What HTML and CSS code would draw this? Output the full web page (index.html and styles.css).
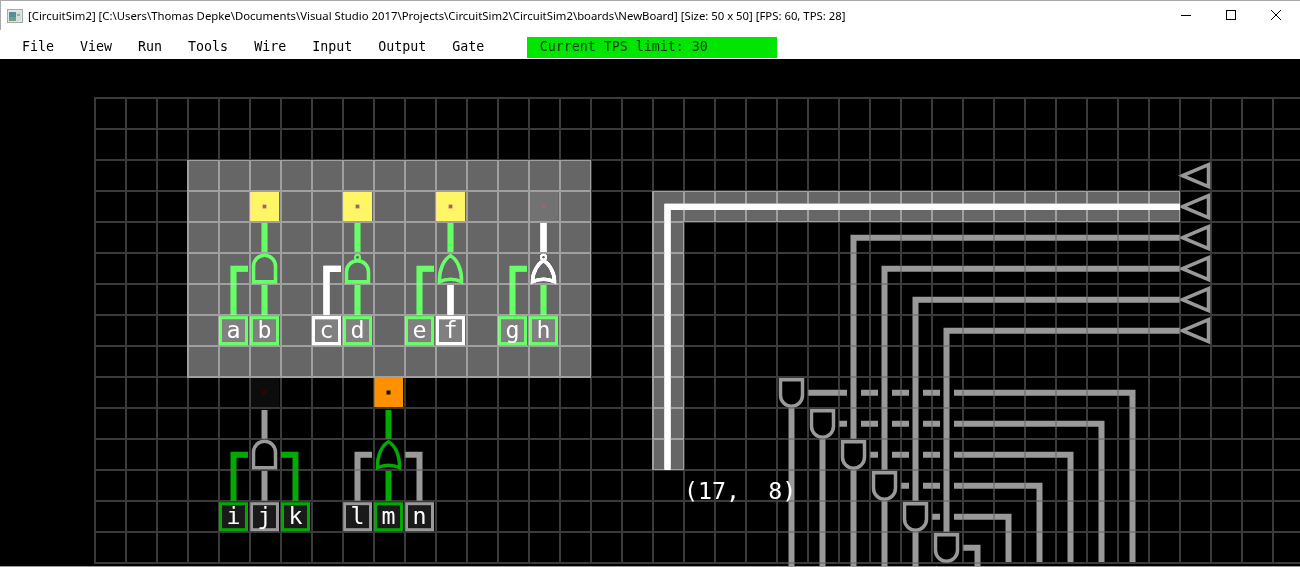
FILE: index.html
```html
<!DOCTYPE html>
<html lang="en">

<head>
  <meta charset="UTF-8">
  <title>CircuitSim2</title>
  <link rel="stylesheet" href="styles.css">
</head>

<body>
  <div class="titlebar">
    <svg class="app-icon" width="16" height="14" viewBox="0 0 16 14">
      <rect x="0.5" y="0.5" width="15" height="13" fill="#e4e4e4" stroke="#a8a8a8" />
      <rect x="2" y="3" width="7" height="9" fill="#4f8f9f" />
      <rect x="2" y="8" width="7" height="4" fill="#6f9f85" />
      <rect x="9" y="3" width="5" height="9" fill="#d4dedb" />
      <rect x="10" y="5" width="3" height="2" fill="#8fb59f" />
    </svg>
    <span class="title">[CircuitSim2] [C:\Users\Thomas Depke\Documents\Visual Studio 2017\Projects\CircuitSim2\CircuitSim2\boards\NewBoard] [Size: 50 x 50] [FPS: 60, TPS: 28]</span>
    <div class="controls">
      <svg width="12" height="12" viewBox="0 0 12 12"><path d="M1 6.5H11" /></svg>
      <svg width="12" height="12" viewBox="0 0 12 12"><rect x="1.5" y="1.5" width="9" height="9" /></svg>
      <svg width="12" height="12" viewBox="0 0 12 12"><path d="M1 1L11 11M11 1L1 11" /></svg>
    </div>
  </div>

  <div class="menubar">
    <span>File</span>
    <span>View</span>
    <span>Run</span>
    <span>Tools</span>
    <span>Wire</span>
    <span>Input</span>
    <span>Output</span>
    <span>Gate</span>
    <div class="tps">Current TPS limit: 30</div>
  </div>

  <svg class="board" width="1300" height="508" viewBox="0 59 1300 508">
    <defs>
      <path id="and" d="M-11 13V-2.5A11 11 0 0 1 11 -2.5V13Z" />
      <path id="and-down" d="M-11 -13V2.5A11 11 0 0 0 11 2.5V-13Z" />
      <path id="or" d="M-11 13Q0 8 11 13C11.5 0 6 -10 0 -13C-6 -10 -11.5 0 -11 13Z" />
      <g id="nand">
        <path d="M-11 13V3A11 11 0 0 1 11 3V13Z" />
        <circle cy="-11.5" r="2.5" stroke-width="2" />
      </g>
      <g id="nor">
        <path d="M-11 13Q0 8 11 13C11 4 6 -5 0 -8C-6 -5 -11 4 -11 13Z" />
        <circle cy="-11.5" r="2.5" stroke-width="2" />
      </g>
      <path id="out" d="M-13 0L13 -11V11Z" />
      <rect id="box" x="-13" y="-13" width="26" height="26" />
    </defs>

    <!-- wires -->
    <g class="wires on">
      <path d="M264.5 223V252M264.5 285V315M233.5 315V268.7H248" />
      <path d="M357.5 223V252M357.5 285V315" />
      <path d="M450.5 223V252M419.5 315V268.7H434" />
      <path d="M543.5 285V315M512.5 315V268.7H527" />
      <path d="M233.5 501V454.7H248M295.5 501V454.7H281M388.5 410V439M388.5 471V501" />
    </g>
    <g class="wires high">
      <path d="M326.5 315V268.7H341M450.5 285V315M543.5 223V252" />
      <path d="M1180 206.7H667.5V470" />
    </g>
    <g class="wires off">
      <path d="M264.5 410V439M264.5 471V501M357.5 501V454.7H372M419.5 501V454.7H405" />
      <path d="M1180 237.7H853.5V439M1180 268.7H884.5V470M1180 299.7H915.5V501M1180 330.7H946.5V532" />
      <path d="M791.5 408V566M822.5 439V566M853.5 470V566M884.5 501V566M915.5 532V566" />
      <path d="M808 392.7H847M861 392.7H878M892 392.7H909M923 392.7H940M954 392.7H1132.5V562" />
      <path d="M839 423.7H847M861 423.7H878M892 423.7H909M923 423.7H940M954 423.7H1101.5V562" />
      <path d="M870 454.7H878M892 454.7H909M923 454.7H940M954 454.7H1070.5V562" />
      <path d="M901 485.7H909M923 485.7H940M954 485.7H1039.5V562" />
      <path d="M932 516.7H940M954 516.7H1008.5V562" />
      <path d="M963 547.7H977.5V566" />
    </g>

    <!-- gates -->
    <g class="gates">
      <use href="#and" class="on" x="264.5" y="268.7" />
      <use href="#nand" class="on" x="357.5" y="268.7" />
      <use href="#or" class="on" x="450.5" y="268.7" />
      <use href="#nor" class="high" x="543.5" y="268.7" />
      <use href="#and" class="off" x="264.5" y="454.7" />
      <use href="#or" class="on" x="388.5" y="454.7" />
      <use href="#and-down" class="off" x="791.5" y="392.7" />
      <use href="#and-down" class="off" x="822.5" y="423.7" />
      <use href="#and-down" class="off" x="853.5" y="454.7" />
      <use href="#and-down" class="off" x="884.5" y="485.7" />
      <use href="#and-down" class="off" x="915.5" y="516.7" />
      <use href="#and-down" class="off" x="946.5" y="547.7" />
      <use href="#out" class="off" x="1195.5" y="175.7" />
      <use href="#out" class="off" x="1195.5" y="206.7" />
      <use href="#out" class="off" x="1195.5" y="237.7" />
      <use href="#out" class="off" x="1195.5" y="268.7" />
      <use href="#out" class="off" x="1195.5" y="299.7" />
      <use href="#out" class="off" x="1195.5" y="330.7" />
    </g>

    <!-- lamps -->
    <rect class="lamp lit" x="250" y="192" width="29" height="29" />
    <rect class="lamp lit" x="343" y="192" width="29" height="29" />
    <rect class="lamp lit" x="436" y="192" width="29" height="29" />
    <rect class="lamp dark" x="529" y="192" width="29" height="29" />
    <rect class="lamp dark" x="250" y="378" width="29" height="29" />
    <rect class="lamp lit" x="374" y="378" width="29" height="29" />
    <rect class="lamp-dot" x="262.5" y="204.5" width="4" height="4" />
    <rect class="lamp-dot" x="355.5" y="204.5" width="4" height="4" />
    <rect class="lamp-dot" x="448.5" y="204.5" width="4" height="4" />
    <rect class="lamp-dot red" x="541.5" y="204.5" width="4" height="4" />
    <rect class="lamp-dot red" x="262.5" y="390.5" width="4" height="4" />
    <rect class="lamp-dot" x="386.5" y="390.5" width="4" height="4" />

    <!-- input nodes -->
    <g class="nodes">
      <use href="#box" class="on" x="233.5" y="330.7" />
      <use href="#box" class="on" x="264.5" y="330.7" />
      <use href="#box" class="high" x="326.5" y="330.7" />
      <use href="#box" class="on" x="357.5" y="330.7" />
      <use href="#box" class="on" x="419.5" y="330.7" />
      <use href="#box" class="high" x="450.5" y="330.7" />
      <use href="#box" class="on" x="512.5" y="330.7" />
      <use href="#box" class="on" x="543.5" y="330.7" />
      <use href="#box" class="on" x="233.5" y="516.7" />
      <use href="#box" class="off" x="264.5" y="516.7" />
      <use href="#box" class="on" x="295.5" y="516.7" />
      <use href="#box" class="off" x="357.5" y="516.7" />
      <use href="#box" class="on" x="388.5" y="516.7" />
      <use href="#box" class="off" x="419.5" y="516.7" />
    </g>

    <!-- one path so the crossings don't add up -->
    <path class="grid" d="M94 98H1300m0 31H94m0 31H1300m0 31H94m0 31H1300m0 31H94m0 31H1300m0 31H94m0 31H1300m0 31H94m0 31H1300m0 31H94m0 31H1300m0 31H94m0 31H1300m0 31H94
      M95 97V564m31 0V97m31 0V564m31 0V97m31 0V564m31 0V97m31 0V564m31 0V97m31 0V564m31 0V97m31 0V564m31 0V97m31 0V564m31 0V97m31 0V564m31 0V97m31 0V564m31 0V97m31 0V564m31 0V97m31 0V564m31 0V97m31 0V564m31 0V97m31 0V564m31 0V97m31 0V564m31 0V97m31 0V564m31 0V97m31 0V564m31 0V97
      m31 0V564m31 0V97m31 0V564m31 0V97m31 0V564m31 0V97m31 0V564" />

    <!-- selection adds light on top of everything under it -->
    <path class="selection" d="M187 160H591V378H187ZM652 191H1180V222H684V470H652Z" />

    <g class="labels">
      <text x="233.5" y="338">a</text>
      <text x="264.5" y="338">b</text>
      <text x="326.5" y="338">c</text>
      <text x="357.5" y="338">d</text>
      <text x="419.5" y="338">e</text>
      <text x="450.5" y="338">f</text>
      <text x="512.5" y="338">g</text>
      <text x="543.5" y="338">h</text>
      <text x="233.5" y="524">i</text>
      <text x="264.5" y="524">j</text>
      <text x="295.5" y="524">k</text>
      <text x="357.5" y="524">l</text>
      <text x="388.5" y="524">m</text>
      <text x="419.5" y="524">n</text>
    </g>
    <text class="coords" x="684" y="499">(17,&#160; 8)</text>
    <rect class="bottom-edge" x="0" y="566" width="1300" height="1" />
  </svg>
</body>

</html>
```

FILE: styles.css
```css
body {
  margin: 0;
  width: 1300px;
  height: 567px;
  overflow: hidden;
  background: #000;
}

.titlebar {
  display: flex;
  align-items: center;
  height: 29px;
  padding-left: 6px;
  background: #fff;
  border-top: 1px solid #aaa;
  border-left: 1px solid #aaa;
}

.app-icon {
  margin-right: 5px;
}

.title {
  font-family: "Noto Sans", sans-serif;
  font-size: 11.34px;
  color: #000;
  white-space: nowrap;
}

.controls {
  display: flex;
  gap: 33px;
  margin-left: auto;
  margin-right: 18px;
  margin-bottom: 2px;
}

.controls svg {
  fill: none;
  stroke: #000;
  stroke-width: 1;
}

.menubar {
  display: flex;
  gap: 26px;
  height: 29px;
  box-sizing: border-box;
  padding: 7px 0 1px 22px;
  background: #fff;
  font-family: "DejaVu Sans Mono", monospace;
  font-size: 13.3px;
  line-height: 20px;
  color: #000;
}

.tps {
  width: 250px;
  margin-left: 17px;
  padding-left: 12.5px;
  box-sizing: border-box;
  line-height: 20px;
  background: #00e600;
  color: #033203;
}

.board {
  display: block;
}

.grid {
  fill: none;
  stroke: #686868;
  stroke-opacity: 0.56;
  stroke-width: 2;
}

.wires {
  fill: none;
  stroke-width: 6;
}

.wires.on {
  stroke: #00aa00;
}

.wires.high {
  stroke: #fff;
}

.wires.off {
  stroke: #999;
}

.gates {
  fill: none;
  stroke-width: 3.5;
}

.gates .on,
.nodes .on {
  stroke: #00aa00;
}

.gates .high,
.nodes .high {
  stroke: #fff;
}

.gates .off,
.nodes .off {
  stroke: #999;
}

.lamp.lit {
  fill: #ff9000;
}

.lamp.dark {
  fill: #0c0c0c;
}

.lamp-dot {
  fill: #111;
}

.lamp-dot.red {
  fill: #3a0000;
}

.nodes {
  fill: #1a1a1a;
  stroke-width: 3;
}

.selection {
  fill: #666;
  mix-blend-mode: plus-lighter;
}

.labels text,
.coords {
  font-family: "DejaVu Sans Mono", monospace;
  font-size: 23.3px;
  fill: #fff;
}

.labels text {
  text-anchor: middle;
}

.bottom-edge {
  fill: #999;
}
```
